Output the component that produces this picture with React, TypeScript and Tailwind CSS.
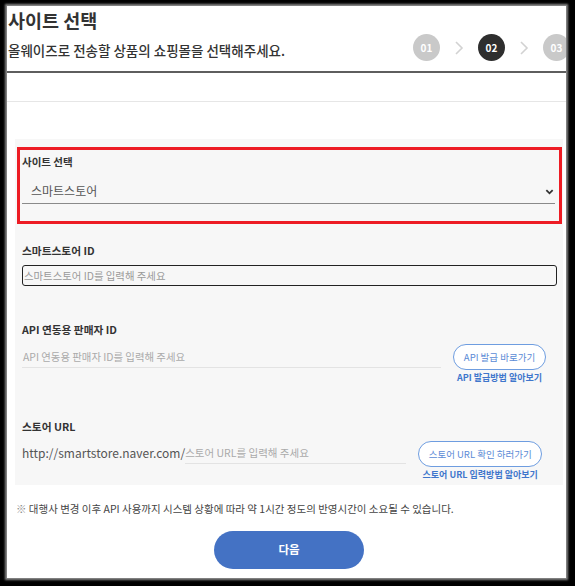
const FONT = "font-['Noto_Sans_CJK_KR','Noto_Sans',sans-serif]"

function Chevron({ className = '' }: { className?: string }) {
  return (
    <svg viewBox="0 0 10 16" className={className} fill="none" stroke="currentColor" strokeWidth="1.6">
      <path d="M2 2l6 6-6 6" />
    </svg>
  )
}

function Steps() {
  return (
    <div className="mr-[-4px] flex shrink-0 items-center gap-[12px]">
      <span className="flex h-[27px] w-[27px] items-center justify-center rounded-full bg-[#c9c9c9] text-[10px] font-bold text-white">
        01
      </span>
      <Chevron className="h-[16px] w-[14px] text-[#d2d2d2]" />
      <span className="flex h-[27px] w-[27px] items-center justify-center rounded-full bg-[#2e2e2e] text-[10px] font-bold text-white">
        02
      </span>
      <Chevron className="h-[16px] w-[14px] text-[#d2d2d2]" />
      <span className="flex h-[27px] w-[27px] items-center justify-center rounded-full bg-[#c9c9c9] text-[10px] font-bold text-white">
        03
      </span>
    </div>
  )
}

function SideLinks({ button, link, width }: { button: string; link: string; width: string }) {
  return (
    <div className={`flex shrink-0 flex-col items-center ${width}`}>
      <button className="h-[26px] w-full whitespace-nowrap rounded-full border border-[#6e9de0] bg-white text-[9.5px] text-[#5b8bd6]">
        {button}
      </button>
      <a className="mt-[1px] whitespace-nowrap text-[9px] font-bold leading-[14px] text-[#3f76cc]">{link}</a>
    </div>
  )
}

export default function App() {
  return (
    <div className={`h-[586px] w-[575px] overflow-hidden bg-black pl-[7px] pt-[6px] ${FONT}`}>
      <div className="h-[572px] w-[559px] overflow-hidden bg-white shadow-[0_0_2px_2px_#8a8a8a]">
        {/* header */}
        <header className="flex items-end border-b-2 border-[#5e5e5e] pb-[10px]">
          <div className="flex-1 pl-[1px]">
            <h1 className="text-[18.5px] font-bold leading-[28px] text-[#333]">사이트 선택</h1>
            <p className="mt-[5px] text-[13.5px] font-medium leading-[22px] text-[#333]">
              올웨이즈로 전송할 상품의 쇼핑몰을 선택해주세요.
            </p>
          </div>
          <Steps />
        </header>

        <div className="mt-[28px] h-[1px] bg-[#e6e6e6]" />

        {/* form panel */}
        <section className="ml-[8px] mt-[37px] w-[548px] bg-[#f7f7f7] pb-[3px] pt-[8px]">
          <div className="ml-[2px] w-[545px] border-[3px] border-[#ed1c24] pb-[17px] pl-[2px] pr-[4px] pt-[4px]">
            <div className="text-[10.5px] font-bold leading-[16px] text-[#333]">사이트 선택</div>
            <div className="mt-[9px] flex h-[25px] items-center justify-between border-b border-[#8a8a8a] pl-[9px] pr-[1px]">
              <span className="text-[12px] text-[#555]">스마트스토어</span>
              <svg viewBox="0 0 10 10" className="h-[9px] w-[9px] text-[#333]" fill="none" stroke="currentColor" strokeWidth="2">
                <path d="M1.5 3.5L5 7l3.5-3.5" />
              </svg>
            </div>
          </div>

          <div className="pl-[7px] pr-[6px]">
            <div className="mt-[19px] text-[10.7px] font-bold leading-[16px] text-[#333]">스마트스토어 ID</div>
            <div className="mt-[6px] flex h-[21px] items-center rounded-[3px] border-[1.5px] border-[#222] bg-[#f7f7f7] pl-[1px] text-[10.4px] text-[#9a9a9a]">
              스마트스토어 ID를 입력해 주세요
            </div>

            <div className="mt-[36px] text-[10.7px] font-bold leading-[16px] text-[#333]">API 연동용 판매자 ID</div>
            <div className="mt-[6px] flex items-start">
              <div className="mt-[3px] flex h-[21px] w-[419px] items-center border-b border-[#e3e3e3] pl-[1px] text-[10.4px] text-[#aaa]">
                API 연동용 판매자 ID를 입력해 주세요
              </div>
              <div className="ml-[12px]">
                <SideLinks button="API 발급 바로가기" link="API 발급방법 알아보기" width="w-[93px]" />
              </div>
            </div>

            <div className="mt-[34px] text-[10.7px] font-bold leading-[16px] text-[#333]">스토어 URL</div>
            <div className="mt-[6px] flex items-start">
              <span className="mt-[2px] whitespace-nowrap text-[12px] leading-[20px] text-[#555]">http://smartstore.naver.com/</span>
              <div className="mt-[2px] flex h-[21px] w-[221px] items-center border-b border-[#e3e3e3] text-[10.5px] text-[#aaa]">
                스토어 URL를 입력해 주세요
              </div>
              <div className="ml-[12px]">
                <SideLinks button="스토어 URL 확인 하러가기" link="스토어 URL 입력방법 알아보기" width="w-[124px]" />
              </div>
            </div>
          </div>
        </section>

        <p className="ml-[9px] mt-[16px] text-[10.5px] leading-[16px] text-[#444]">
          <span className="text-[#888]">※</span> 대행사 변경 이후 API 사용까지 시스템 상황에 따라 약 1시간 정도의 반영시간이 소요될 수 있습니다.
        </p>

        <button className="ml-[207px] mt-[14px] h-[38px] w-[150px] rounded-full bg-[#4472c4] text-[11.5px] font-bold text-white">
          다음
        </button>
      </div>
    </div>
  )
}
